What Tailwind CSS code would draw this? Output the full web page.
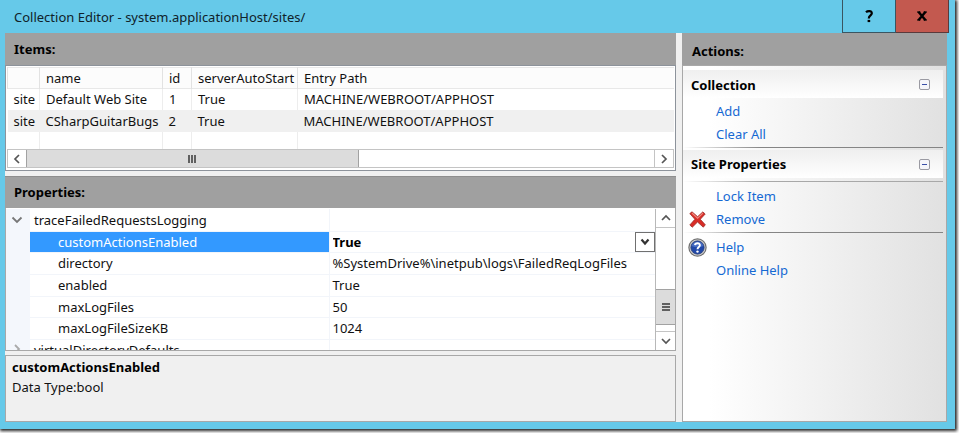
<!DOCTYPE html>
<html lang="en">
<head>
<meta charset="utf-8">
<title>Collection Editor</title>
<script src="https://cdn.jsdelivr.net/npm/@tailwindcss/browser@4"></script>
</head>
<body class="h-screen overflow-hidden bg-white pr-1 pb-1 font-['Noto_Sans','Open_Sans',sans-serif] text-[13px] leading-5 text-[#111]">
<div class="flex h-full flex-col bg-[#66c9e9] pr-2 pb-[7px] pl-[5px] shadow-[1px_1px_3px_1px_#222]">
  <header class="flex h-[33px] shrink-0 items-stretch">
    <h1 class="flex-1 pt-[7px] pl-[9px] text-[#10222a]">Collection Editor - system.applicationHost/sites/</h1>
    <div class="-mr-[2px] flex">
      <button aria-label="Help" class="flex w-[54px] items-center justify-center border border-t-0 border-[#3a5561] text-black">
        <svg class="h-4 w-4" viewBox="0 0 16 16" fill="none" stroke="currentColor" stroke-width="2.2"><path d="M5 4.2C6.2 3 11 2.2 10.8 5.4C10.7 7.4 7.8 7.4 7.8 10.4"/><path d="M6.6 13h2.6"/></svg>
      </button>
      <button aria-label="Close" class="flex w-[53px] items-center justify-center border border-t-0 border-l-0 border-[#5a3a3c] bg-[#c3594f] text-black">
        <svg class="h-4 w-4" viewBox="0 0 16 16" fill="none" stroke="currentColor" stroke-width="2.4"><path d="M4.4 3.8L11.6 12.2M11.6 3.8L4.4 12.2"/><path d="M3 4h3.4M9.6 4H13M3 12h3.4M9.6 12H13" stroke-width="1"/></svg>
      </button>
    </div>
  </header>

  <div class="flex min-h-0 flex-1 gap-[6px] bg-[#f0f0f0]">
    <main class="flex min-w-0 flex-1 flex-col">
      <h2 class="h-8 shrink-0 bg-[#a0a0a0] pt-[6px] pl-[9px] font-bold text-black">Items:</h2>
      <section class="flex h-[106px] shrink-0 flex-col border border-[#8d939b] bg-white px-px pt-px">
        <div class="min-h-0 flex-1 overflow-hidden">
          <table class="w-full table-fixed border-collapse text-left whitespace-nowrap">
            <colgroup><col class="w-8"><col class="w-[123px]"><col class="w-[29px]"><col class="w-[106px]"><col></colgroup>
            <thead>
              <tr class="h-[21px] border-t border-b border-[#e8e8e8] bg-[#fcfcfc]">
                <th class="border-x border-[#e2e2e2] p-0"></th>
                <th class="border-r border-[#e2e2e2] p-0 pl-[6px] font-normal">name</th>
                <th class="border-r border-[#e2e2e2] p-0 pl-[6px] font-normal">id</th>
                <th class="border-r border-[#e2e2e2] p-0 pl-[6px] font-normal">serverAutoStart</th>
                <th class="p-0 pl-[6px] font-normal">Entry Path</th>
              </tr>
            </thead>
            <tbody>
              <tr class="h-[21px]">
                <td class="border-r border-[#ededed] p-0 pl-[6px]">site</td>
                <td class="border-r border-[#ededed] p-0 pl-[6px]">Default Web Site</td>
                <td class="border-r border-[#ededed] p-0 pl-[6px]">1</td>
                <td class="border-r border-[#ededed] p-0 pl-[6px]">True</td>
                <td class="p-0 pl-[6px]">MACHINE/WEBROOT/APPHOST</td>
              </tr>
              <tr class="h-[22px] bg-[#f0f0f0]">
                <td class="p-0 pl-[6px]">site</td>
                <td class="p-0 pl-[6px]">CSharpGuitarBugs</td>
                <td class="p-0 pl-[6px]">2</td>
                <td class="p-0 pl-[6px]">True</td>
                <td class="p-0 pl-[6px]">MACHINE/WEBROOT/APPHOST</td>
              </tr>
              <tr class="h-[22px]">
                <td class="border-r border-[#ededed]"></td><td class="border-r border-[#ededed]"></td><td class="border-r border-[#ededed]"></td><td class="border-r border-[#ededed]"></td><td></td>
              </tr>
            </tbody>
          </table>
        </div>
        <div class="mb-[2px] flex h-[19px] shrink-0 border border-[#c4c4c4] bg-white text-[#555]">
          <button aria-label="Scroll left" class="flex w-[18px] items-center justify-center"><svg class="h-[10px] w-[10px]" viewBox="0 0 10 10" fill="none" stroke="currentColor" stroke-width="1.7"><path d="M7 1L3 5L7 9"/></svg></button>
          <div class="flex flex-1">
            <div class="flex w-[53%] items-center justify-center gap-px border-x border-[#a2a2a2] bg-[#dcdcdc]">
              <i class="h-2 w-[2px] bg-[#606060]"></i><i class="h-2 w-[2px] bg-[#606060]"></i><i class="h-2 w-[2px] bg-[#606060]"></i>
            </div>
          </div>
          <button aria-label="Scroll right" class="flex w-[19px] items-center justify-center border-l border-[#c4c4c4]"><svg class="h-[10px] w-[10px]" viewBox="0 0 10 10" fill="none" stroke="currentColor" stroke-width="1.7"><path d="M3 1L7 5L3 9"/></svg></button>
        </div>
      </section>

      <h2 class="mt-[5px] h-8 shrink-0 border-t border-[#8e8e8e] bg-[#a0a0a0] pt-[5px] pl-[9px] font-bold text-black">Properties:</h2>
      <section class="flex h-[143px] shrink-0 border border-t-0 border-[#a8a8a8] bg-white pt-px">
        <div class="min-w-0 flex-1 overflow-hidden">
          <table class="w-full table-fixed border-collapse text-left whitespace-nowrap">
            <colgroup><col class="w-6"><col class="w-[299px]"><col></colgroup>
            <tbody>
              <tr class="h-[22px]">
                <td class="bg-[#f4f7fc] p-0"><button aria-label="Collapse" class="flex w-[22px] justify-center text-[#777]"><svg class="h-[10px] w-3" viewBox="0 0 12 10" fill="none" stroke="currentColor" stroke-width="1.8"><path d="M1.500 2.500L6 7L10.500 2.500"/></svg></button></td>
                <th class="border-r border-b border-[#f2f5fa] p-0 pl-1 font-normal">traceFailedRequestsLogging</th>
                <td class="border-b border-[#f2f5fa] p-0"></td>
              </tr>
              <tr class="h-[21px]">
                <td class="bg-[#f4f7fc] p-0"></td>
                <th class="border-r border-b border-[#f2f5fa] bg-[#3399ff] p-0 pl-7 font-normal text-white"><label for="cae">customActionsEnabled</label></th>
                <td class="border-b border-[#f2f5fa] p-0">
                  <div class="relative flex">
                    <select id="cae" class="h-5 w-full appearance-none bg-transparent pl-[3px] font-bold text-black outline-none"><option>True</option><option>False</option></select>
                    <span class="pointer-events-none absolute top-0 right-0 flex h-5 w-5 items-center justify-center border border-[#707070] bg-white text-[#333]"><svg class="h-[10px] w-[10px]" viewBox="0 0 10 10" fill="none" stroke="currentColor" stroke-width="2.2"><path d="M1.500 2.500L5 6.500L8.500 2.500"/></svg></span>
                  </div>
                </td>
              </tr>
              <tr class="h-[22px]">
                <td class="bg-[#f4f7fc] p-0"></td>
                <th class="border-r border-b border-[#f2f5fa] p-0 pl-7 font-normal">directory</th>
                <td class="border-b border-[#f2f5fa] p-0 pl-[3px]">%SystemDrive%\inetpub\logs\FailedReqLogFiles</td>
              </tr>
              <tr class="h-[22px]">
                <td class="bg-[#f4f7fc] p-0"></td>
                <th class="border-r border-b border-[#f2f5fa] p-0 pl-7 font-normal">enabled</th>
                <td class="border-b border-[#f2f5fa] p-0 pl-[3px]">True</td>
              </tr>
              <tr class="h-[21px]">
                <td class="bg-[#f4f7fc] p-0"></td>
                <th class="border-r border-b border-[#f2f5fa] p-0 pl-7 font-normal">maxLogFiles</th>
                <td class="border-b border-[#f2f5fa] p-0 pl-[3px]">50</td>
              </tr>
              <tr class="h-[22px]">
                <td class="bg-[#f4f7fc] p-0"></td>
                <th class="border-r border-b border-[#f2f5fa] p-0 pl-7 font-normal">maxLogFileSizeKB</th>
                <td class="border-b border-[#f2f5fa] p-0 pl-[3px]">1024</td>
              </tr>
              <tr class="h-[20px]">
                <td class="bg-[#f4f7fc] p-0"><button aria-label="Expand" class="flex w-[22px] justify-center text-[#aaa]"><svg class="h-[10px] w-[10px]" viewBox="0 0 10 10" fill="none" stroke="currentColor" stroke-width="1.8"><path d="M3 1L7 5L3 9"/></svg></button></td>
                <th class="border-r border-[#f2f5fa] p-0 pl-1 font-normal">virtualDirectoryDefaults</th>
                <td class="p-0"></td>
              </tr>
            </tbody>
          </table>
        </div>
        <div class="flex w-[20px] shrink-0 flex-col border-l border-[#b8b8b8] text-[#555]">
          <button aria-label="Scroll up" class="flex h-[19px] items-center justify-center border-b border-[#c4c4c4]"><svg class="h-[10px] w-[10px]" viewBox="0 0 10 10" fill="none" stroke="currentColor" stroke-width="1.700"><path d="M1 7L5 3L9 7"/></svg></button>
          <div class="flex flex-1 flex-col justify-end pb-[6px]">
            <div class="flex h-9 flex-col items-center justify-center gap-px border-y border-[#a2a2a2] bg-[#dcdcdc]">
              <i class="h-[2px] w-2 bg-[#606060]"></i><i class="h-[2px] w-2 bg-[#606060]"></i><i class="h-[2px] w-2 bg-[#606060]"></i>
            </div>
          </div>
          <button aria-label="Scroll down" class="flex h-[19px] items-center justify-center border-t border-[#c4c4c4]"><svg class="h-[10px] w-[10px]" viewBox="0 0 10 10" fill="none" stroke="currentColor" stroke-width="1.700"><path d="M1 3L5 7L9 3"/></svg></button>
        </div>
      </section>
      <section class="mt-1 min-h-0 flex-1 border border-[#a8a8a8] bg-[#f0f0f0] pt-px pl-[6px]">
        <h3 class="font-bold text-black">customActionsEnabled</h3>
        <p>Data Type:bool</p>
      </section>
    </main>

    <aside class="flex w-[265px] shrink-0 flex-col">
      <h2 class="h-8 shrink-0 bg-[#a0a0a0] pt-2 pl-[10px] font-bold text-black">Actions:</h2>
      <div class="flex min-h-0 flex-1 flex-col border border-[#a8a8a8] bg-linear-to-r from-white from-10% to-[#e1e1e1] pr-[3px] pt-1">
        <div class="flex h-7 shrink-0 items-center justify-between bg-linear-to-b from-[#efefef] to-white pr-[13px] pl-2">
          <h3 class="pt-[2px] font-bold text-black">Collection</h3>
          <button aria-label="Collapse Collection" class="flex h-[11px] w-[11px] items-center justify-center rounded-[2px] border border-[#9a9aa2] bg-[#f6f6fa]"><i class="h-px w-[5px] bg-[#3a4fa8]"></i></button>
        </div>
        <nav class="flex flex-col gap-[3px] pt-[3px] pb-[3px] pl-[33px] text-[#1569d3]"><a href="#">Add</a><a href="#">Clear All</a></nav>
        <div class="h-px shrink-0 bg-linear-to-r from-transparent to-[#858585] to-30%"></div>
        <div class="mt-[2px] flex h-7 shrink-0 items-center justify-between bg-linear-to-b from-[#efefef] to-white pr-[13px] pl-2">
          <h3 class="font-bold text-black">Site Properties</h3>
          <button aria-label="Collapse Site Properties" class="flex h-[11px] w-[11px] items-center justify-center rounded-[2px] border border-[#9a9aa2] bg-[#f6f6fa]"><i class="h-px w-[5px] bg-[#3a4fa8]"></i></button>
        </div>
        <div class="mt-[3px] h-px shrink-0 bg-linear-to-r from-transparent to-[#a8a8a8] to-30%"></div>
        <nav class="flex flex-col gap-[3px] pt-1 pb-[3px] text-[#1569d3]">
          <a href="#" class="pl-[33px]">Lock Item</a>
          <a href="#" class="flex items-center pl-[6px]">
            <svg class="mr-[10px] h-[17px] w-[17px]" viewBox="0 0 17 17"><path d="M3 .8L8.600 5.700L13.800.900L16.200 3L11.300 8.300L16.300 13.800L14.300 16.200L8.500 11L3.300 16.200L.8 14L5.900 8.300L.8 2.600Z" fill="#d92c26" stroke="#9b2f2b" stroke-width=".8"/><path d="M2.900 2L8.600 7.200L13.900 2.200" fill="none" stroke="#f08a80" stroke-width="1.100"/></svg>Remove</a>
        </nav>
        <div class="h-px shrink-0 bg-linear-to-r from-transparent to-[#858585] to-30%"></div>
        <nav class="flex flex-col gap-[3px] pt-1 text-[#1569d3]">
          <a href="#" class="flex items-center pl-[5px]">
            <svg class="mr-[9px] h-[19px] w-[19px]" viewBox="0 0 19 19"><circle cx="9.500" cy="9.500" r="8.600" fill="#d4d4d4" stroke="#707070" stroke-width="1.200"/><circle cx="9.500" cy="9.500" r="6.700" fill="#2148a8" stroke="#34436f" stroke-width=".7"/><path d="M3.600 8A6.200 6.200 0 0 1 15.400 8Q9.500 10.500 3.600 8Z" fill="#5f86d6" opacity=".6"/><path d="M7 7.200C7.200 4.700 12 4.600 11.900 7.300C11.800 9 9.500 9 9.500 11.300" fill="none" stroke="#fff" stroke-width="1.900"/><circle cx="9.500" cy="13.600" r="1.200" fill="#fff"/></svg>Help</a>
          <a href="#" class="pl-[33px]">Online Help</a>
        </nav>
      </div>
    </aside>
  </div>
</div>
</body>
</html>
